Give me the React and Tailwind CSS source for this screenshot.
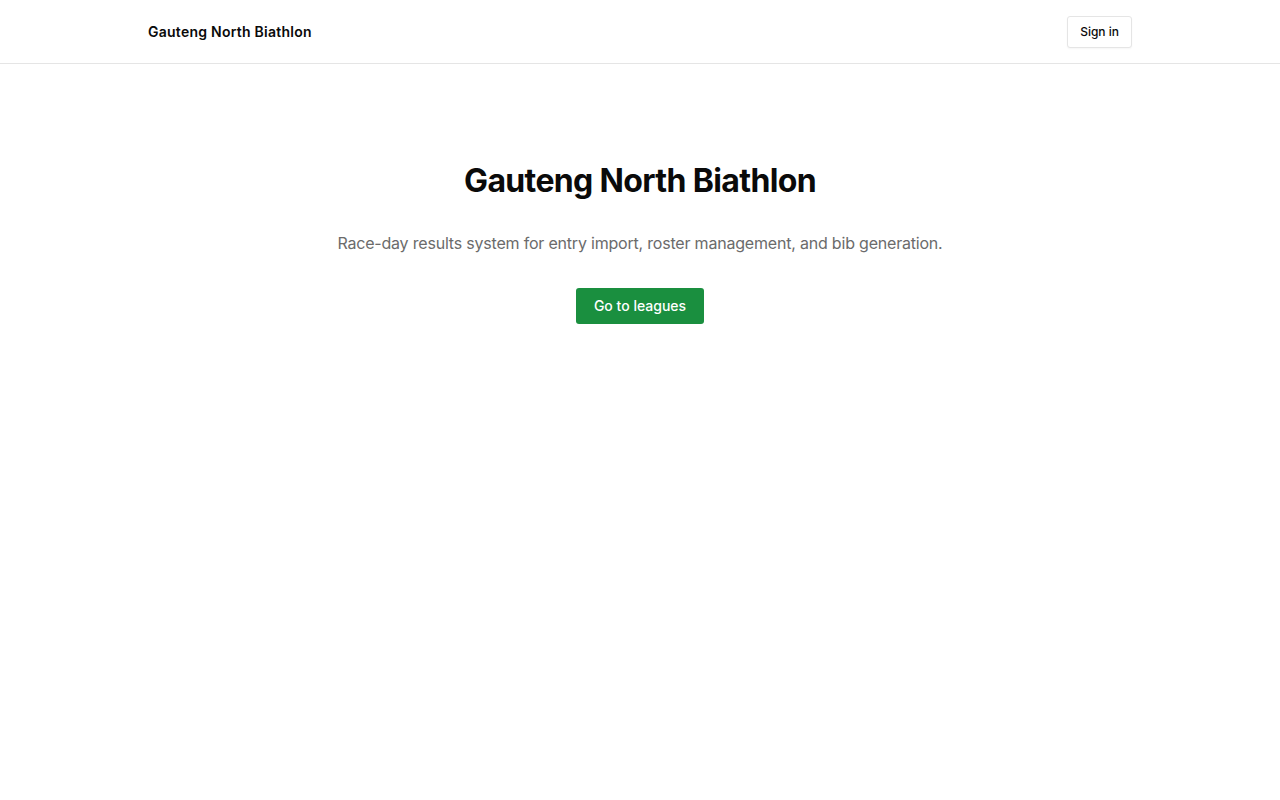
export default function App() {
  return (
    <div className="min-h-screen bg-white text-[#0a0a0a]" style={{ fontFamily: "Inter, 'Noto Sans', sans-serif" }}>
      <header className="h-16 border-b border-[#e5e5e5]">
        <div className="mx-auto flex h-full max-w-[984px] items-center justify-between">
          <span className="text-sm font-semibold tracking-[0.018em]">Gauteng North Biathlon</span>
          <button className="h-8 rounded-[3px] border border-[#e5e5e5] bg-white px-3 text-xs font-medium shadow-[0_1px_2px_rgba(0,0,0,0.04)]">
            Sign in
          </button>
        </div>
      </header>
      <main className="flex flex-col items-center pt-[99px]">
        <h1 className="text-[32px] font-bold leading-[36px] tracking-[-0.02em]">Gauteng North Biathlon</h1>
        <p className="mt-[32px] text-base leading-6 tracking-[-0.0125em] text-[#6b6b6b]">
          Race-day results system for entry import, roster management, and bib generation.
        </p>
        <button className="mt-[33px] h-9 rounded-[3px] bg-[#1a8f3f] px-[18px] text-sm font-medium text-white">
          Go to leagues
        </button>
      </main>
    </div>
  );
}
